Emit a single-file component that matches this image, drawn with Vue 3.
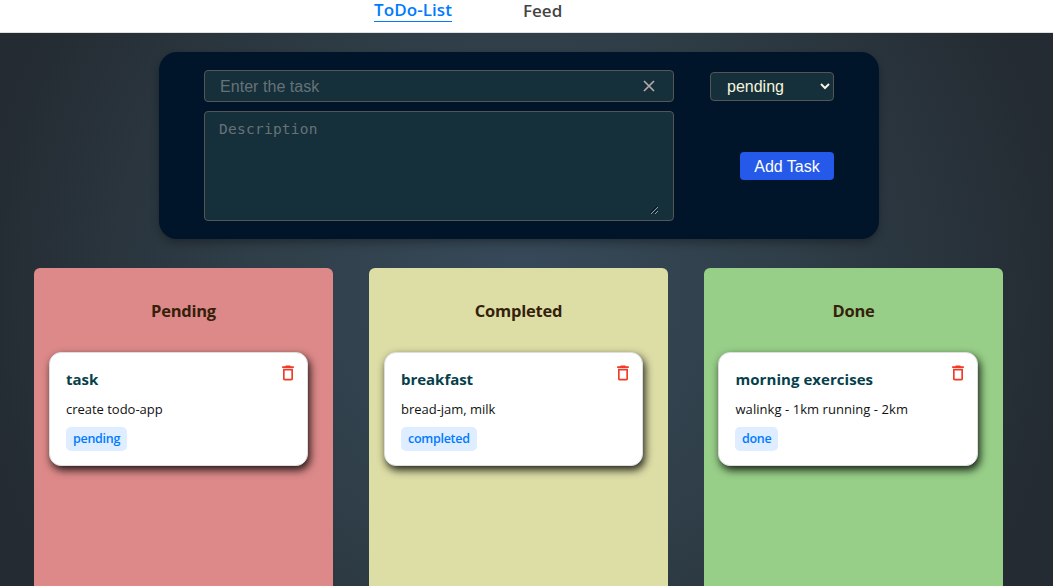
<script setup>
import { ref } from 'vue'

const task = ref('')
const description = ref('')
const status = ref('pending')

const columns = ref([
  { key: 'pending', title: 'Pending', tasks: [{ name: 'task', text: 'create todo-app', status: 'pending' }] },
  { key: 'completed', title: 'Completed', tasks: [{ name: 'breakfast', text: 'bread-jam, milk', status: 'completed' }] },
  { key: 'done', title: 'Done', tasks: [{ name: 'morning exercises', text: 'walinkg - 1km running - 2km', status: 'done' }] },
])

function addTask() {
  if (!task.value) return
  const column = columns.value.find((c) => c.key === status.value)
  column.tasks.push({ name: task.value, text: description.value, status: status.value })
  task.value = ''
  description.value = ''
}
</script>

<template>
  <div class="page">
    <nav class="nav">
      <a class="link active">ToDo-List</a>
      <a class="link feed">Feed</a>
    </nav>
    <main class="main">
      <section class="form">
        <div class="fields">
          <div class="field">
            <input v-model="task" class="input" placeholder="Enter the task" />
            <svg class="clear" viewBox="0 0 12 12" @click="task = ''"><path d="M1 1L11 11M11 1L1 11" /></svg>
          </div>
          <div class="field area">
            <textarea v-model="description" class="textarea" placeholder="Description"></textarea>
            <svg class="grip" viewBox="0 0 8 8"><path class="dark" d="M0 7L7 0M4 7L7 4" /><path d="M1 8L8 1M5 8L8 5" /></svg>
          </div>
        </div>
        <div class="actions">
          <select v-model="status" class="select">
            <option>pending</option>
            <option>completed</option>
            <option>done</option>
          </select>
          <button class="add" @click="addTask">Add Task</button>
        </div>
      </section>
      <section class="board">
        <div v-for="c in columns" :key="c.key" class="column" :class="c.key">
          <h2 class="title"><span>{{ c.title }}</span></h2>
          <article v-for="(t, i) in c.tasks" :key="i" class="card">
            <h3 class="name"><span>{{ t.name }}</span></h3>
            <p class="text"><span>{{ t.text }}</span></p>
            <span class="badge">{{ t.status }}</span>
            <svg class="trash" viewBox="0 0 24 24" @click="c.tasks.splice(i, 1)">
              <path d="M6 19c0 1.1.9 2 2 2h8c1.1 0 2-.9 2-2V7H6v12zM8 9h8v10H8V9zm7.5-5l-1-1h-5l-1 1H5v2h14V4z" />
            </svg>
          </article>
        </div>
      </section>
    </main>
  </div>
</template>

<style>
html, body { margin: 0; height: 100%; overflow: hidden; }
</style>

<style scoped>
.page {
  height: 586px;
  display: flex;
  flex-direction: column;
  overflow: hidden;
  font-family: "Open Sans", "Noto Sans", sans-serif;
}
.nav {
  box-sizing: border-box;
  height: 33px;
  flex: none;
  display: flex;
  align-items: flex-start;
  gap: 71px;
  padding-left: 374px;
  background: #fff;
  border-bottom: 1px solid #e0e0e0;
}
.link {
  height: 21px;
  line-height: 20px;
  font-size: 17px;
  font-weight: 600;
  color: #444;
  white-space: nowrap;
}
.feed { line-height: 22px; }
.active {
  color: #007bff;
  letter-spacing: 0.08px;
  border-bottom: 1px solid #007bff;
}
.main {
  flex: 1;
  min-height: 0;
  display: flex;
  flex-direction: column;
  background: radial-gradient(circle at 520px 262px, #374a5a 0, #2f3e48 270px, #242b32 550px);
}
.form {
  box-sizing: border-box;
  flex: none;
  width: 720px;
  height: 187px;
  margin: 19px 0 0 159px;
  padding: 18px 45px;
  display: flex;
  justify-content: space-between;
  border-radius: 18px;
  background: #001529;
  box-shadow: 0 4px 8px rgba(0, 0, 0, 0.3);
}
.fields { width: 470px; display: flex; flex-direction: column; gap: 9px; }
.field {
  box-sizing: border-box;
  height: 32px;
  position: relative;
  display: flex;
  align-items: center;
  padding: 0 15px;
  border: 1px solid #555;
  border-radius: 4px;
  background: #15303b;
}
.area { height: 110px; padding-left: 14px; }
.input, .textarea {
  border: 0;
  outline: 0;
  padding: 0;
  flex: 1;
  background: transparent;
  color: #fff;
}
.input { padding-top: 2px; font: 16px "Liberation Sans", Arial, sans-serif; letter-spacing: 0.05px; }
.textarea {
  height: 94px;
  resize: none;
  font: 14.5px/20px "DejaVu Sans Mono", monospace;
  letter-spacing: 0.25px;
}
.input::placeholder, .textarea::placeholder { color: #677276; opacity: 1; }
.clear { width: 12px; height: 12px; margin-right: 3px; stroke: #b5a8a8; stroke-width: 1.7; fill: none; }
.grip { position: absolute; right: 15px; bottom: 6px; width: 8px; height: 8px; fill: none; stroke: #b5bcc0; stroke-width: 0.8; }
.grip .dark { stroke: #071219; }
.actions { width: 124px; display: flex; flex-direction: column; align-items: flex-end; }
.select {
  box-sizing: border-box;
  width: 124px;
  height: 29px;
  margin: 2px 0 0;
  padding: 0 1px 0 12px;
  border: 1px solid #555;
  border-radius: 4px;
  background-color: #15303b;
  color: #f5f5dc;
  font: 16px "Liberation Sans", Arial, sans-serif;
}
.add {
  width: 94px;
  height: 28px;
  margin-top: 51px;
  padding: 2px 0 0;
  border: 0;
  border-radius: 4px;
  background: #2459e9;
  color: #fff;
  font: 16px "Liberation Sans", Arial, sans-serif;
}
.board { flex: 1; min-height: 0; margin: 29px 50px 0 34px; display: flex; gap: 36px; }
.column {
  box-sizing: border-box;
  flex: 1;
  padding: 0 15px;
  border-radius: 6px 6px 0 0;
}
.pending { background: #dd8989; }
.completed { background: #dddea6; }
.done { background: #97cf88; }
.title {
  margin: 0;
  height: 84px;
  line-height: 86px;
  text-align: center;
  font-size: 16.5px;
  letter-spacing: -0.25px;
  color: #361f0b;
}
.card {
  box-sizing: border-box;
  position: relative;
  height: 114px;
  width: 259px;
  padding: 16px;
  border-radius: 12px;
  background: #fff;
  border: 1px solid #ddd;
  box-shadow: 2px 4px 8px rgba(0, 0, 0, 0.85);
}
.done .card { width: 260px; margin-left: -1px; }
.done .name, .done .text { padding-left: 0.5px; letter-spacing: 0.05px; }
.name { margin: 0; height: 22px; line-height: 20px; font-size: 15px; color: #063f4b; letter-spacing: -0.03px; }
.text { margin: 8px 0; line-height: 20px; font-size: 13px; letter-spacing: -0.02px; color: #111; white-space: nowrap; }
.badge {
  box-sizing: border-box;
  display: inline-block;
  height: 24px;
  line-height: 24px;
  padding: 0 7px;
  border-radius: 5px;
  background: #deedff;
  color: #007bff;
  font-size: 12.5px;
  font-weight: 600;
  letter-spacing: -0.28px;
  vertical-align: top;
}
.trash { position: absolute; top: 10px; right: 9px; width: 20px; height: 20px; fill: #f23a26; }
</style>
